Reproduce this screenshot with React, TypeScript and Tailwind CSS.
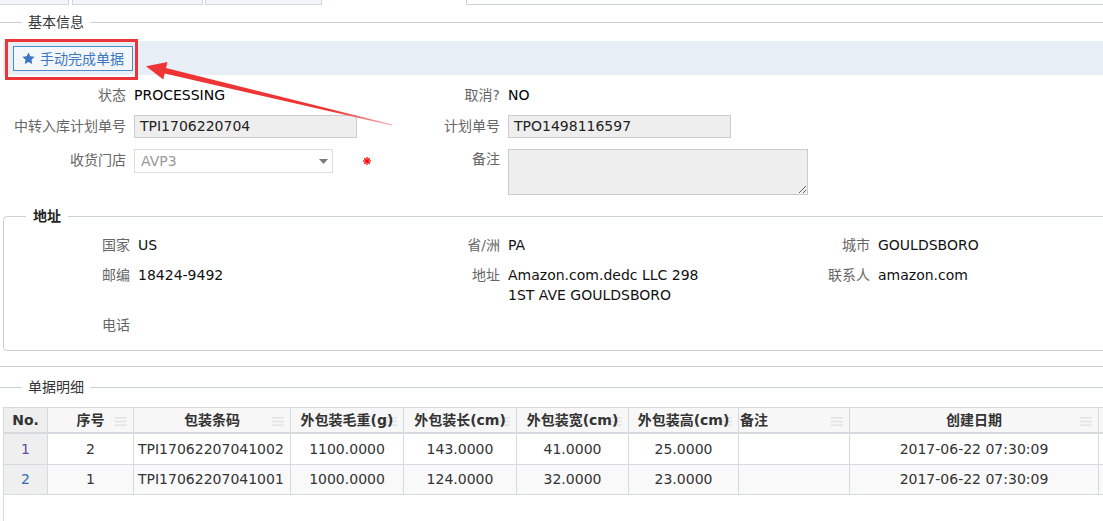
import React from "react";

const B = "border-[#d6dade]";

function MenuIcon() {
  return (
    <svg className="absolute right-[6px] top-[9px]" width="12" height="9" viewBox="0 0 12 9">
      <rect x="0" y="0" width="12" height="1.6" fill="#e3e3e3" />
      <rect x="0" y="3.7" width="12" height="1.6" fill="#e3e3e3" />
      <rect x="0" y="7.4" width="12" height="1.6" fill="#e3e3e3" />
    </svg>
  );
}

function Th({ children, w, left, menu, gray }: { children?: React.ReactNode; w: string; left?: boolean; menu?: boolean; gray?: boolean }) {
  return (
    <div
      className={`relative h-[26px] border-r border-b-2 ${B} ${gray ? "bg-[#eeeeee]" : "bg-[#f7f7f7]"} flex items-center ${left ? "justify-start pl-[1px]" : "justify-center"} font-bold text-[#333] ${w}`}
    >
      {menu && <MenuIcon />}
      <span className="relative">{children}</span>
    </div>
  );
}

function Td({ children, h, left, bg }: { children?: React.ReactNode; h: string; left?: boolean; bg: string }) {
  return (
    <div className={`${h} border-r border-b ${B} ${bg} flex items-center ${left ? "justify-start pl-[4px]" : "justify-center"} text-[#333]`}>
      {children}
    </div>
  );
}

const rows = [
  { no: "1", noColor: "text-[#5a4d9c]", seq: "2", code: "TPI17062207041002", w: "1100.0000", l: "143.0000", wd: "41.0000", ht: "25.0000", date: "2017-06-22 07:30:09", h: "h-[31px]", bg: "bg-white" },
  { no: "2", noColor: "text-[#2e6db6]", seq: "1", code: "TPI17062207041001", w: "1000.0000", l: "124.0000", wd: "32.0000", ht: "23.0000", date: "2017-06-22 07:30:09", h: "h-[30px]", bg: "bg-[#f9f9f9]" },
];

export default function App() {
  return (
    <div className="relative w-[1103px] h-[521px] overflow-hidden bg-white font-['DejaVu_Sans','Noto_Sans_CJK_SC',sans-serif] text-[14px] text-[#222]">
      {/* top strip */}
      <div className="flex h-[5px]">
        <div className="w-[69px] bg-[#f2f5f9] border-r border-b border-[#d0d7df]" />
        <div className="w-[3px]" />
        <div className="w-[131px] bg-[#f2f5f9] border-l border-r border-b border-[#d0d7df]" />
        <div className="w-[2px]" />
        <div className="w-[117px] bg-[#f2f5f9] border-l border-r border-b border-[#d0d7df]" />
        <div className="w-[144px]" />
        <div className="flex-1 bg-white border-l border-b border-[#c9d0d8]" />
      </div>

      {/* 基本信息 */}
      <fieldset className="mt-[7px] border-t border-b border-[#c9d0d8] pb-[15px]">
        <legend className="ml-[22px] px-[6px] leading-[20px] text-[#333]">基本信息</legend>
        <div className="pl-[3px]">
          <div className="mt-[9px] h-[34px] bg-[#e8eef5] pl-[10px] pt-[5px]">
            <button className="flex items-center h-[25px] w-[120px] border border-[#4d8ccf] bg-[#f3f6fa] pl-[8px] text-[#3a78c2] leading-none">
              <svg width="13" height="13" viewBox="0 0 24 24" className="shrink-0">
                <path d="M12 0.8l3.4 7 7.7 1.1-5.6 5.4 1.3 7.7L12 18.4l-6.8 3.6 1.3-7.7L0.9 8.9l7.7-1.1z" fill="#3b74c2" />
              </svg>
              <span className="ml-[5px]">手动完成单据</span>
            </button>
          </div>
        </div>

        {/* row 1 */}
        <div className="mt-[8px] grid grid-cols-[126px_240px_134px_1fr] leading-[24px]">
          <div className="text-right text-[#666]">状态</div>
          <div className="pl-[8px] text-black">PROCESSING</div>
          <div className="text-right text-[#666]">取消?</div>
          <div className="pl-[8px] text-black">NO</div>
        </div>

        {/* row 2 */}
        <div className="mt-[8px] grid grid-cols-[126px_240px_134px_1fr] leading-[23px]">
          <div className="text-right text-[#666]">中转入库计划单号</div>
          <div className="pl-[8px]">
            <div className="w-[223px] h-[23px] border border-[#cccccc] bg-[#eeeeee] pl-[5px] leading-[21px] text-[#222]">TPI1706220704</div>
          </div>
          <div className="text-right text-[#666]">计划单号</div>
          <div className="pl-[8px]">
            <div className="w-[223px] h-[23px] border border-[#cccccc] bg-[#eeeeee] pl-[5px] leading-[21px] text-[#222]">TPO1498116597</div>
          </div>
        </div>

        {/* row 3 */}
        <div className="mt-[11px] grid grid-cols-[126px_240px_134px_1fr] items-start">
          <div className="text-right text-[#666] leading-[22px]">收货门店</div>
          <div className="pl-[8px] flex items-center">
            <div className="shrink-0 w-[199px] h-[24px] border border-[#dddddd] bg-white pl-[6px] pr-[4px] flex items-center justify-between text-[#999]">
              <span>AVP3</span>
              <svg width="9" height="5" viewBox="0 0 9 5">
                <path d="M0 0h9L4.5 5z" fill="#7a7a7a" />
              </svg>
            </div>
            <svg className="shrink-0 ml-[30px]" width="8" height="8" viewBox="0 0 8 8">
              <g stroke="#ff0000" strokeWidth="1.3">
                <line x1="4" y1="0" x2="4" y2="8" />
                <line x1="0" y1="4" x2="8" y2="4" />
                <line x1="1.2" y1="1.2" x2="6.8" y2="6.8" />
                <line x1="6.8" y1="1.2" x2="1.2" y2="6.8" />
              </g>
            </svg>
          </div>
          <div className="text-right text-[#666] leading-[20px]">备注</div>
          <div className="pl-[8px] flex">
            <textarea
              readOnly
              className="block w-[300px] h-[46px] border border-[#cccccc] bg-[#eeeeee] resize outline-none"
            />
          </div>
        </div>

        {/* 地址 */}
        <div className="pl-[3px] mt-[11px]">
          <fieldset className="w-[1110px] border border-[#c9d0d8] rounded-[4px] pb-[15px]">
            <legend className="ml-[22px] px-[7px] leading-[20px] font-bold text-[#222]">地址</legend>
            <div className="pt-[9px] grid grid-cols-[126px_240px_130px_240px_130px_1fr] gap-y-[10px] leading-[20px]">
              <div className="text-right text-[#666]">国家</div>
              <div className="pl-[8px] text-[#111]">US</div>
              <div className="text-right text-[#666]">省/洲</div>
              <div className="pl-[8px] text-[#111]">PA</div>
              <div className="text-right text-[#666]">城市</div>
              <div className="pl-[8px] text-[#111]">GOULDSBORO</div>

              <div className="text-right text-[#666]">邮编</div>
              <div className="pl-[8px] text-[#111]">18424-9492</div>
              <div className="text-right text-[#666]">地址</div>
              <div className="pl-[8px] text-[#111]">
                Amazon.com.dedc LLC 298
                <br />
                1ST AVE GOULDSBORO
              </div>
              <div className="text-right text-[#666]">联系人</div>
              <div className="pl-[8px] text-[#111]">amazon.com</div>

              <div className="text-right text-[#666]">电话</div>
              <div />
              <div />
              <div />
              <div />
              <div />
            </div>
          </fieldset>
        </div>
      </fieldset>

      {/* 单据明细 */}
      <fieldset className="mt-[10px] border-t border-[#c9d0d8]">
        <legend className="ml-[22px] px-[6px] leading-[20px] text-[#333]">单据明细</legend>
        <div className="pt-[10px] pl-[3px]">
          <div className="w-[1140px] h-[200px] border-l border-t border-[#d6dade]">
            <div className="flex">
              <Th w="w-[44px]" gray>No.</Th>
              <Th w="w-[86px]" menu>序号</Th>
              <Th w="w-[157px]" menu>包装条码</Th>
              <Th w="w-[113px]" menu>外包装毛重(g)</Th>
              <Th w="w-[113px]" menu>外包装长(cm)</Th>
              <Th w="w-[112px]" menu>外包装宽(cm)</Th>
              <Th w="w-[110px]" menu>外包装高(cm)</Th>
              <Th w="w-[111px]" menu left>备注</Th>
              <Th w="w-[249px]" menu>创建日期</Th>
              <Th w="w-[40px]"></Th>
            </div>
            {rows.map((r) => (
              <div key={r.no} className="flex">
                <div className={`w-[44px] ${r.h} border-r border-b ${B} bg-[#efefef] flex items-center justify-center ${r.noColor}`}>{r.no}</div>
                <div className="w-[86px]"><Td h={r.h} bg={r.bg}>{r.seq}</Td></div>
                <div className="w-[157px]"><Td h={r.h} bg={r.bg} left>{r.code}</Td></div>
                <div className="w-[113px]"><Td h={r.h} bg={r.bg}>{r.w}</Td></div>
                <div className="w-[113px]"><Td h={r.h} bg={r.bg}>{r.l}</Td></div>
                <div className="w-[112px]"><Td h={r.h} bg={r.bg}>{r.wd}</Td></div>
                <div className="w-[110px]"><Td h={r.h} bg={r.bg}>{r.ht}</Td></div>
                <div className="w-[111px]"><Td h={r.h} bg={r.bg}></Td></div>
                <div className="w-[249px]"><Td h={r.h} bg={r.bg}>{r.date}</Td></div>
                <div className="w-[40px]"><Td h={r.h} bg={r.bg}></Td></div>
              </div>
            ))}
          </div>
        </div>
      </fieldset>

      {/* annotation overlay */}
      <svg className="absolute left-0 top-0 pointer-events-none" width="1103" height="521" viewBox="0 0 1103 521">
        <defs>
          <linearGradient id="ag" gradientUnits="userSpaceOnUse" x1="146" y1="66" x2="392" y2="125">
            <stop offset="0" stopColor="#ee3434" />
            <stop offset="0.75" stopColor="#ee3434" />
            <stop offset="1" stopColor="#f8a8a8" />
          </linearGradient>
        </defs>
        <rect x="6.5" y="40.5" width="130" height="38" fill="none" stroke="#ec3538" strokeWidth="3" />
        <polygon
          points="146,66.2 167.5,62 166,68.1 392.1,124.4 391.9,125.6 164.7,73.5 163.3,79.6"
          fill="url(#ag)"
        />
      </svg>
    </div>
  );
}
